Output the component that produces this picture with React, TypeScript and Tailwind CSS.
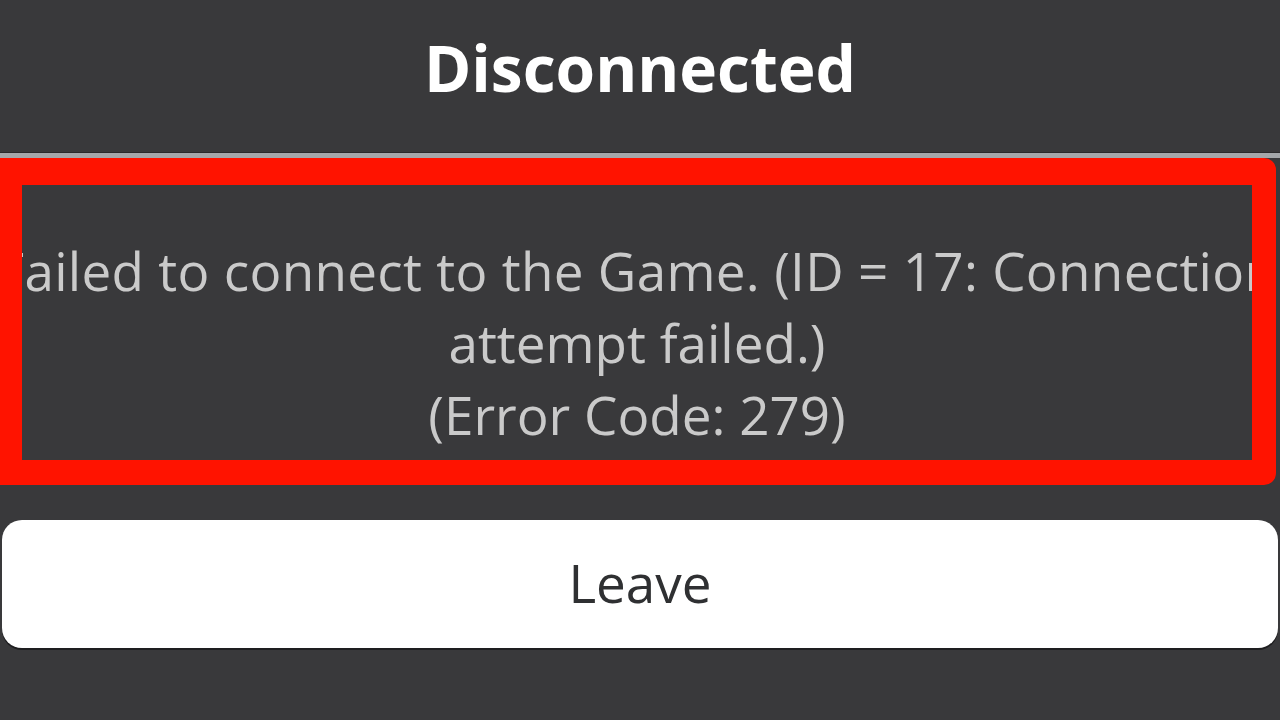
export default function App() {
  return (
    <div className="flex h-screen w-full flex-col overflow-hidden bg-[#39393b] font-['Open_Sans',sans-serif]">
      {/* title */}
      <div className="flex h-[152px] shrink-0 items-center justify-center pb-[16px]">
        <h1 className="text-[64px] font-bold leading-none text-white">Disconnected</h1>
      </div>
      <div className="h-[1px] shrink-0 bg-[#2a2a2c]" />
      <div className="h-[5px] shrink-0 bg-[#a4a7aa]" />

      {/* message, with the red annotation frame */}
      <div className="mr-[4px] flex h-[327px] shrink-0 flex-col items-center overflow-hidden rounded-r-[12px] border-b-[25px] border-l-[22px] border-r-[24px] border-t-[27px] border-[#ff1300] pt-[50px] text-[53px] leading-[72px] text-[#cacaca]">
        <p className="whitespace-nowrap tracking-[0.3px]">Failed to connect to the Game. (ID = 17: Connection</p>
        <p className="whitespace-nowrap">attempt failed.)</p>
        <p className="whitespace-nowrap">(Error Code: 279)</p>
      </div>

      {/* leave button */}
      <div className="mt-[35px] shrink-0 px-[2px]">
        <button className="flex h-[128px] w-full items-center justify-center rounded-[20px] bg-white pb-[2px] text-[53px] text-[#2f3032] shadow-[0_2px_0_#1e1e20]">
          Leave
        </button>
      </div>
    </div>
  )
}
